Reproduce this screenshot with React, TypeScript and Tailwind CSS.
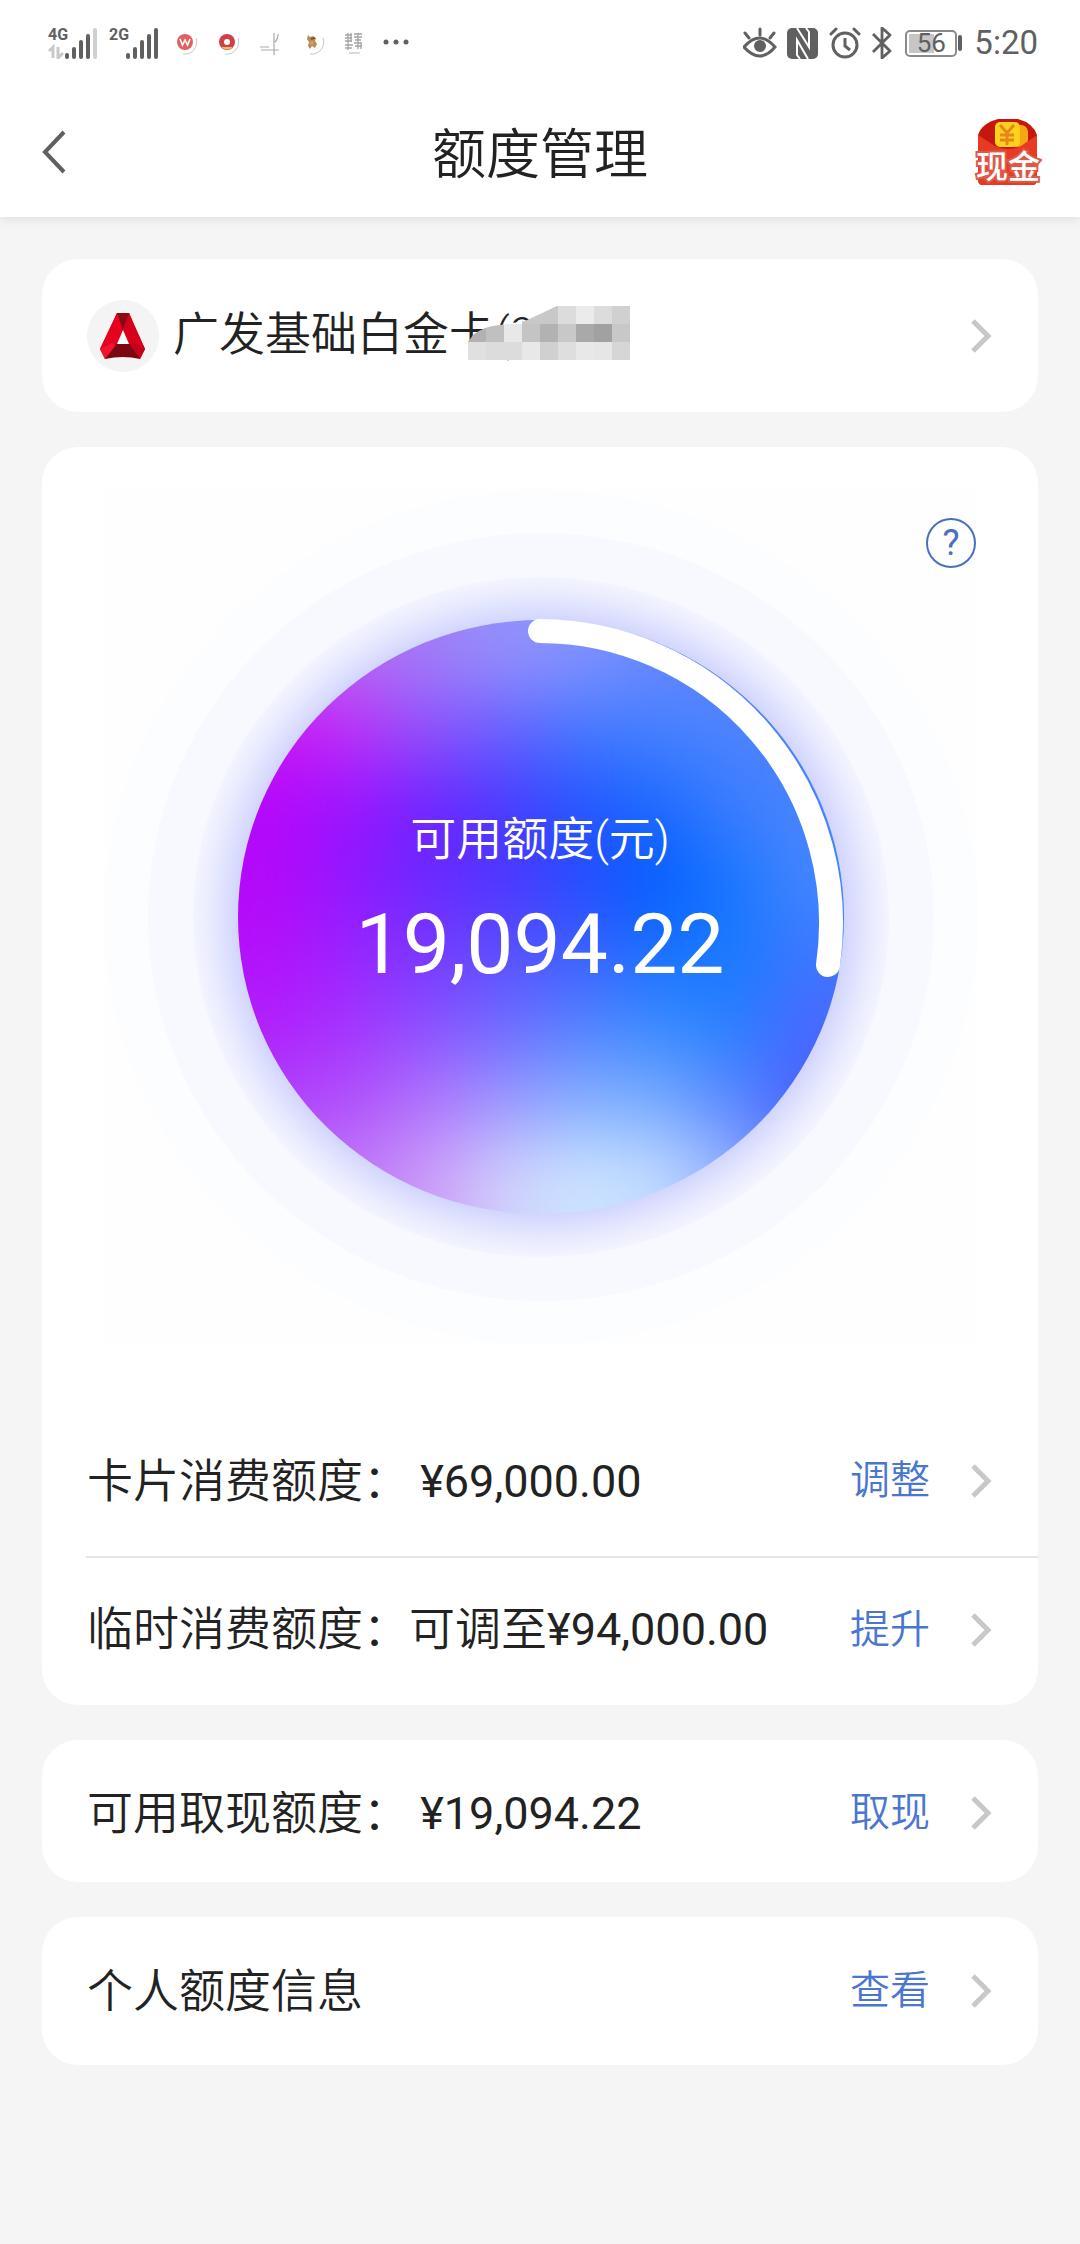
import React from 'react';

const MESH = [
  ['#c850f2', '#b868f4', '#a07cf8', '#9490fc', '#8292ff', '#6888ff', '#5c84ff', '#5080ff'],
  ['#cc14f6', '#bc30f6', '#9050fb', '#6860ff', '#4478ff', '#4480ff', '#4c84ff', '#4c80ff'],
  ['#b408fc', '#9a14ff', '#7024ff', '#4a3aff', '#2456ff', '#1a6aff', '#3b7cff', '#4a84ff'],
  ['#b408fa', '#9018ff', '#6a28ff', '#5034ff', '#264cff', '#045eff', '#1876ff', '#4486ff'],
  ['#b410fa', '#9824ff', '#7838ff', '#5a50ff', '#3c60ff', '#1870ff', '#167aff', '#3c78ff'],
  ['#b020fc', '#a434fe', '#8c50ff', '#6f6cff', '#5482ff', '#3c8cff', '#2880ff', '#4a68ff'],
  ['#b040fc', '#b050fa', '#b074fc', '#9c98ff', '#86b0ff', '#78acff', '#5c88ff', '#4860ff'],
  ['#b870f8', '#c078f8', '#cc9cf8', '#d0d0fc', '#cce4ff', '#c4dcff', '#98b4ff', '#5870ff'],
];

const MOSAIC = [
  ['#fff', '#fff', '#fff', '#c8c8c8', '#c8c8c8', '#dcdcdc', '#ebebeb', '#dcdcdc', '#d0d0d0'],
  ['#b2b2b2', '#c0c0c0', '#e8e8e8', '#c4c4c4', '#b2b2b2', '#c8c8c8', '#a9a9a9', '#a1a1a1', '#c8c8c8'],
  ['#e0e0e0', '#dcdcdc', '#dcdcdc', '#e8e8e8', '#d0d0d0', '#dedede', '#e8e8e8', '#e6e6e6', '#d6d6d6'],
];

const Chevron = () => (
  <svg width="22" height="34" viewBox="0 0 22 34" fill="none" aria-hidden="true">
    <path d="M3 2 L18 17 L3 32" stroke="#c8c8c8" strokeWidth="5" />
  </svg>
);

interface SignalProps {
  label: string;
  weak?: boolean;
}

const Signal = ({ label, weak }: SignalProps) => (
  <div className="relative h-8 w-[50px]">
    <span className="absolute left-0 top-0 text-[16px] leading-4 font-bold">{label}</span>
    <svg className="absolute inset-0" width="50" height="32" viewBox="0 0 50 32" aria-hidden="true">
      {weak && (
        <g fill="none" stroke="#c9c9c9" strokeWidth="3">
          <path d="M1 24 L5 20 V31" />
          <path d="M10 20 V31 L15 26" />
        </g>
      )}
      {[6, 12, 19, 25, 31].map((h, i) => (
        <rect
          key={h}
          x={17 + i * 7}
          y={32 - h}
          width="4"
          height={h}
          rx="2"
          fill={weak && i === 4 ? '#cfcfcf' : '#606060'}
        />
      ))}
    </svg>
  </div>
);

const NotificationIcons = () => (
  <svg width="236" height="28" viewBox="0 0 236 28" fill="none" aria-hidden="true">
    <path d="M22 9 A12 12 0 0 1 9 25" stroke="#c9c9c9" strokeWidth="1" />
    <circle cx="11" cy="13" r="8" fill="#e2605f" />
    <path d="M6 10 L8.500 16 L11 11 L13.500 16 L16 10" stroke="#fff" strokeWidth="1.600" />
    <path d="M64 9 A12 12 0 0 1 51 25" stroke="#c9c9c9" strokeWidth="1" />
    <circle cx="53" cy="13" r="8" fill="#cb4348" />
    <path d="M47 18 Q53 23 59 18 Z" fill="#f3b65c" />
    <circle cx="53" cy="13" r="3" fill="#fff" />
    <g stroke="#a9a9a9" strokeWidth="1.200">
      <path d="M86 18 H95 M87 21 H105 M100 4 V26 M104 5 Q104 10 101 13" />
    </g>
    <path d="M149 9 A12 12 0 0 1 136 25" stroke="#c9c9c9" strokeWidth="1" />
    <path d="M134 6 L136 8 L139 7 L142 9 L141 12 L143 15 L141 19 L138 17 L136 20 L134 17 L135 13 L133 10 Z" fill="#b98a5c" />
    <path d="M135 13 L140 12 L138 17 Z" fill="#e0a04c" />
    <path d="M137 10 L141 9" stroke="#6b4a32" strokeWidth="1.500" />
    <g stroke="#a5a5a5" strokeWidth="1.300">
      <path d="M171 6 H178 M171 9 H178 M171 12 H178 M174 4 V21 M177 4 V13 M180 5 H188 M180 8 H188 M181 11 H187 M184 4 V20 M171 16 H179 M171 19 H178 M180 14 H188 M181 17 H188 M187 14 V20" />
      <path d="M175 24 H186" stroke="#c4c4c4" />
    </g>
    <g fill="#606060">
      <circle cx="212" cy="13" r="2.500" />
      <circle cx="222" cy="13" r="2.500" />
      <circle cx="232" cy="13" r="2.500" />
    </g>
  </svg>
);

const StatusBar = () => (
  <div className="flex h-[86px] items-center justify-between pl-12 pr-[42px] text-[#606060]">
    <div className="flex items-center gap-[11px]">
      <Signal label="4G" weak />
      <Signal label="2G" />
      <div className="pl-1">
        <NotificationIcons />
      </div>
    </div>
    <div className="flex items-center">
      <svg width="150" height="32" viewBox="0 0 150 32" fill="none" stroke="#606060" aria-hidden="true">
        {/* eye comfort */}
        <path d="M1 20 Q17 2 32 20 Q17 38 1 20 Z" strokeWidth="3" />
        <circle cx="17" cy="19" r="6" fill="#606060" stroke="none" />
        <path d="M17 8 V2 M6 11 L2 6 M27 11 L31 6" strokeWidth="3" strokeLinecap="round" />
        {/* nfc */}
        <rect x="44" y="1" width="31" height="31" rx="5" fill="#606060" stroke="none" />
        <path d="M54 1 L66 20 V5 L63 1 M65 32 L54 13 V28 L57 32" stroke="#fff" strokeWidth="2" />
        {/* alarm */}
        <circle cx="102" cy="18" r="12" strokeWidth="3" />
        <path d="M102 11 V19 L107 23" strokeWidth="3" />
        <path d="M88 7 L93 2 M116 7 L111 2" strokeWidth="3" strokeLinecap="round" />
        {/* bluetooth */}
        <path d="M130 7 L147 24 L139 31 V1 L147 8 L130 25" strokeWidth="2.800" strokeLinejoin="round" />
      </svg>
      <div className="ml-3 flex h-[27px] w-[52px] rounded-[5px] border-2 border-[#8a8a8a] bg-[linear-gradient(90deg,#c6c6c6_56%,#fff_56%)] bg-clip-content p-0.5">
        <span className="-my-0.5 flex-1 text-center text-[26px] leading-[23px]">56</span>
      </div>
      <div className="ml-px h-4 w-1 rounded-sm bg-[#606060]" />
      <span className="ml-3 text-[33px] leading-8">5:20</span>
    </div>
  </div>
);

const CashIcon = () => (
  <svg width="68" height="68" viewBox="0 0 68 68" aria-hidden="true">
    <path d="M4 17 Q8 5 24 1 H44 Q59 5 63 17 V62 Q63 67 58 67 H9 Q4 67 4 62 Z" fill="#c6170f" />
    <rect x="38" y="7" width="16" height="22" rx="7" fill="#f6a713" />
    <rect x="21" y="4" width="25" height="25" rx="5" fill="#fdd21c" />
    <path d="M26 7 L33 15 L40 7 M33 15 V27 M26 17 H40 M26 22 H40" stroke="#e8861a" strokeWidth="3" fill="none" />
    <path d="M4 17 L21 28 Q34 34 47 28 L63 17 V62 Q63 67 58 67 H9 Q4 67 4 62 Z" fill="#e63a22" />
    <text
      x="34"
      y="60"
      textAnchor="middle"
      fontSize="32"
      fontWeight="500"
      fill="#fff"
      stroke="#dc5a48"
      strokeWidth="4"
      paintOrder="stroke"
    >
      现金
    </text>
  </svg>
);

const BankLogo = () => (
  <span className="flex size-[72px] shrink-0 items-center justify-center rounded-full bg-[#f4f4f5]">
    <svg width="46" height="46" viewBox="0 0 46 46" aria-hidden="true">
      <path d="M17 0 H29 L35 14 L45 36 L40 46 L23 38 L5 46 L0 36 Z" fill="#e2001f" />
      <path d="M17 0 H29 L31 6 L23 18 Z" fill="#8c0716" />
      <path d="M17 0 L23 18 L12 36 L0 36 Z" fill="#e4021f" />
      <path d="M29 0 L23 16 L33 32 L45 36 Z" fill="#d6001c" />
      <path d="M12 31 H34 L40 46 Q23 42 5 46 Z" fill="#7c0711" />
      <path d="M0 36 L12 30 L16 32 L5 46 Z" fill="#f0142e" />
      <path d="M45 36 L34 30 L30 32 L40 46 Z" fill="#c4001a" />
      <path d="M23 17 L29 31 H17 Z" fill="#fff" />
    </svg>
  </span>
);

const Gauge = () => (
  <svg className="block w-full" viewBox="0 0 876 856" aria-hidden="true">
    <defs>
      <clipPath id="disc">
        <ellipse cx="439" cy="429" rx="303" ry="297" />
      </clipPath>
      <filter id="soften" x="-20%" y="-20%" width="140%" height="140%" colorInterpolationFilters="sRGB">
        <feGaussianBlur stdDeviation="34" />
      </filter>
      <radialGradient id="glow">
        <stop offset="0.860" stopColor="#ced2fd" />
        <stop offset="0.920" stopColor="#e0e3fe" />
        <stop offset="0.960" stopColor="#ebedfe" />
        <stop offset="1" stopColor="#f3f4ff" />
      </radialGradient>
    </defs>
    <rect width="876" height="856" fill="#fefefe" />
    <ellipse cx="439" cy="429" rx="437" ry="427" fill="#fcfdff" />
    <ellipse cx="439" cy="429" rx="393" ry="384" fill="#f8f9ff" />
    <ellipse cx="439" cy="429" rx="348" ry="340" fill="url(#glow)" />
    <g clipPath="url(#disc)">
      <g filter="url(#soften)">
        {MESH.map((row, r) =>
          row.map((color, c) => (
            <rect
              key={`${r}-${c}`}
              x={c === 0 ? 36 : 135 + c * 76}
              y={r === 0 ? 32 : 132 + r * 74}
              width={c === 0 || c === 7 ? 176 : 77}
              height={r === 0 || r === 7 ? 175 : 75}
              fill={color}
            />
          ))
        )}
      </g>
    </g>
    <path d="M438 143 A292 292 0 0 1 726 477" fill="none" stroke="#fff" strokeWidth="24" strokeLinecap="round" />
  </svg>
);

interface LimitRowProps {
  label: string;
  amount?: string;
  action: string;
}

const LimitRow = ({ label, amount, action }: LimitRowProps) => (
  <div className="flex h-full items-center pl-[45px] pr-[46px]">
    <span className="flex-1 whitespace-pre text-[46px] leading-[56px]">
      {label}
      {amount && <span className="text-[45px] font-normal">{amount}</span>}
    </span>
    <button type="button" className="flex items-center gap-10">
      <span className="text-[40px] leading-[52px] text-[#4a76d0]">{action}</span>
      <Chevron />
    </button>
  </div>
);

const App = () => {
  return (
    <div className="min-h-screen bg-[#f5f5f5] font-[Roboto,'Noto_Sans_CJK_SC',sans-serif] font-[350] text-[#222]">
      <div className="bg-white shadow-[0_2px_10px_rgba(0,0,0,0.1)]">
        <div className="font-normal">
          <StatusBar />
        </div>
        <header className="flex h-[131px] items-center justify-between pl-[42px] pr-[38px]">
          <button type="button" aria-label="返回" className="w-16">
            <svg width="24" height="44" viewBox="0 0 24 44" fill="none" aria-hidden="true">
              <path d="M22 2 L3 22 L22 42" stroke="#606060" strokeWidth="4" />
            </svg>
          </button>
          <h1 className="pt-2 text-[54px] leading-[64px]">额度管理</h1>
          <button type="button" aria-label="现金">
            <CashIcon />
          </button>
        </header>
      </div>

      <main className="flex flex-col gap-[35px] px-[42px] pt-[42px]">
        <button type="button" className="flex h-[153px] items-center rounded-[36px] bg-white pl-[45px] pr-[46px] text-left">
          <BankLogo />
          <span className="relative ml-3.5 flex-1 pb-1 text-[46px] leading-[56px]">
            广发基础白金卡(9
            <svg className="absolute left-[295px] top-0" width="162" height="54" viewBox="0 0 162 54" aria-hidden="true">
              <clipPath id="smudge">
                <path d="M0 54 V36 L5 29 Q16 20 32 19 L57 15 L89 0 H162 V54 Z" />
              </clipPath>
              <g clipPath="url(#smudge)" shapeRendering="crispEdges">
                {MOSAIC.map((row, r) =>
                  row.map((color, c) => (
                    <rect key={`${r}-${c}`} x={c * 18} y={r * 18} width="18" height="18" fill={color} />
                  ))
                )}
              </g>
            </svg>
          </span>
          <Chevron />
        </button>

        <section className="rounded-[36px] bg-white pb-1">
          <div className="relative px-[60px] pt-[41px]">
            <Gauge />
            <div className="absolute inset-x-0 top-[364px] flex flex-col items-center text-white">
              <p className="text-[46px] leading-[56px]">可用额度(元)</p>
              <p className="mt-7 text-[84px] leading-[100px] font-normal">19,094.22</p>
            </div>
            <button
              type="button"
              aria-label="帮助"
              className="absolute right-[62px] top-[71px] flex size-[50px] items-center justify-center rounded-full border-2 border-[#4a6fc0] text-[36px] leading-10 font-normal text-[#4a6fc0]"
            >
              ?
            </button>
          </div>
          <div className="mt-[62px] h-[150px]">
            <LimitRow label="卡片消费额度：" amount=" ¥69,000.00" action="调整" />
          </div>
          <div className="ml-11 h-0.5 bg-[#e6e6e6]" />
          <div className="h-[143px]">
            <LimitRow label="临时消费额度：可调至" amount="¥94,000.00" action="提升" />
          </div>
        </section>

        <section className="h-[142px] rounded-[36px] bg-white pt-1">
          <LimitRow label="可用取现额度：" amount=" ¥19,094.22" action="取现" />
        </section>

        <section className="h-[148px] rounded-[36px] bg-white">
          <LimitRow label="个人额度信息" action="查看" />
        </section>
      </main>
    </div>
  );
};

export default App;
